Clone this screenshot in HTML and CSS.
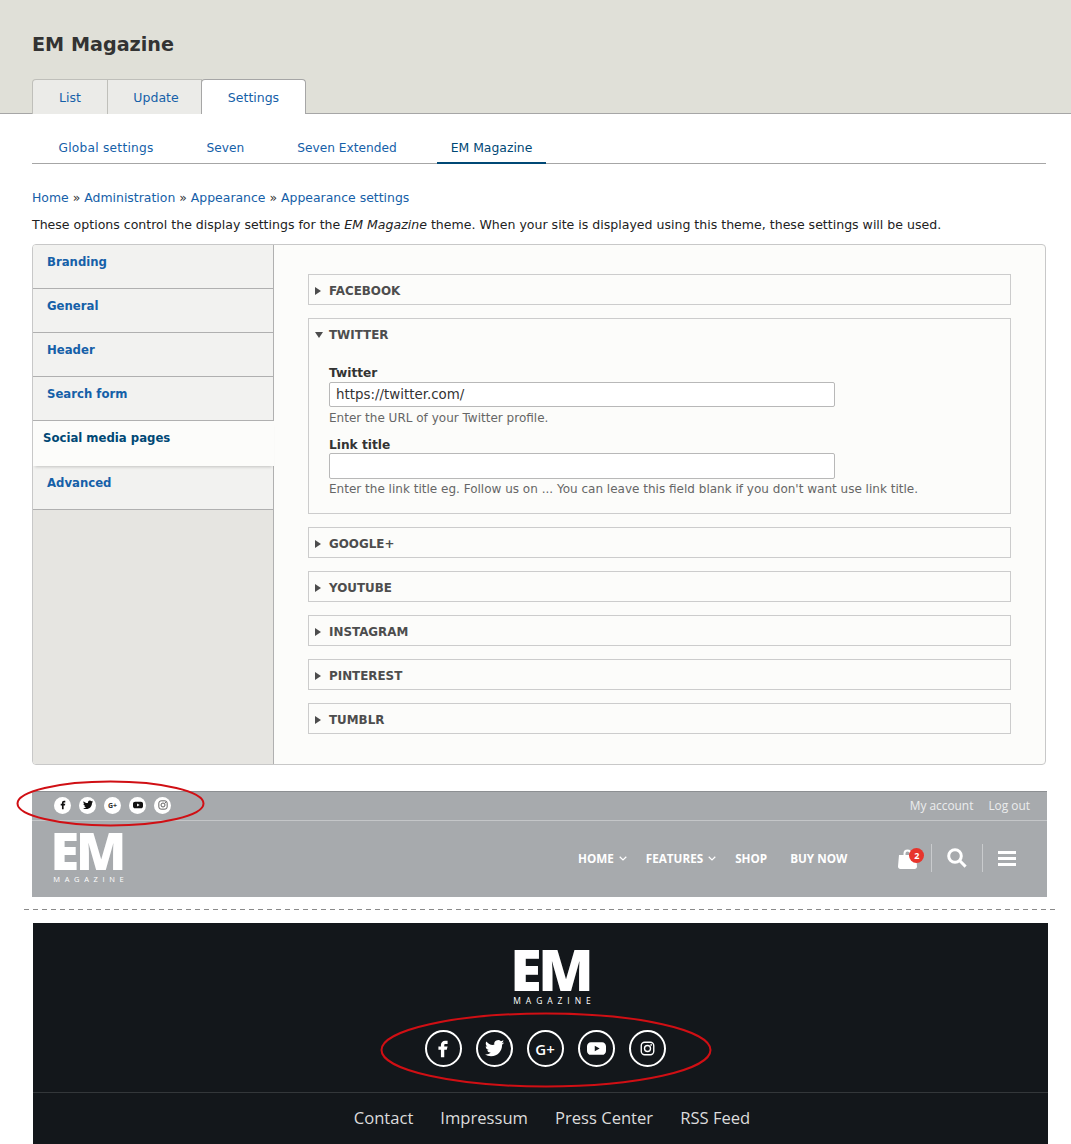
FILE: index.html
```html
<!DOCTYPE html>
<html lang="en">
<head>
<meta charset="utf-8">
<title>EM Magazine</title>
<link rel="stylesheet" href="styles.css">
</head>
<body>
<svg class="defs" width="0" height="0" aria-hidden="true">
  <symbol id="i-fb" viewBox="-0.5 2 24 24"><path d="M14 8h3V4h-3c-2.8 0-5 2.2-5 5v2H6v4h3v9h4v-9h3l1-4h-4V9c0-.6.4-1 1-1z"/></symbol>
  <symbol id="i-tw" viewBox="0 0 24 24"><path d="M23.953 4.57a10 10 0 01-2.825.775 4.958 4.958 0 002.163-3.746 9.864 9.864 0 01-3.127 1.184 4.92 4.92 0 00-8.384 4.482C7.69 8.095 4.067 6.13 1.64 3.162a4.822 4.822 0 00-.666 2.475c0 1.71.87 3.213 2.188 4.096a4.904 4.904 0 01-2.228-.616v.06a4.923 4.923 0 003.946 4.827 4.996 4.996 0 01-2.212.085 4.936 4.936 0 004.604 3.417 9.867 9.867 0 01-6.102 2.105c-.39 0-.779-.023-1.17-.067a13.995 13.995 0 007.557 2.209c9.053 0 13.998-7.496 13.998-13.985 0-.21 0-.42-.015-.63A9.935 9.935 0 0024 4.59z"/></symbol>
  <symbol id="i-yt" viewBox="0 0 24 24"><path fill-rule="evenodd" d="M5 4h14c2.8 0 5 2.2 5 5v6c0 2.800-2.200 5-5 5H5c-2.800 0-5-2.200-5-5V9c0-2.800 2.200-5 5-5zm4.800 4.400v7.200l6.200-3.600z"/></symbol>
  <symbol id="i-ig" viewBox="0 0 24 24"><rect x="2" y="2" width="20" height="20" rx="5.500" fill="none" stroke="currentColor" stroke-width="2.200"/><circle cx="12" cy="12" r="4.800" fill="none" stroke="currentColor" stroke-width="2.200"/><circle cx="17.800" cy="6.200" r="1.400"/></symbol>
</svg>

<header class="admin-head">
  <h1 class="title">EM Magazine</h1>
  <nav class="tabs">
    <a class="tab" href="#">List</a>
    <a class="tab tab-update" href="#">Update</a>
    <a class="tab tab-active" href="#">Settings</a>
  </nav>
</header>

<main class="admin-body">
  <nav class="subtabs">
    <a class="subtab subtab-first" href="#">Global settings</a>
    <a class="subtab" href="#">Seven</a>
    <a class="subtab" href="#">Seven Extended</a>
    <a class="subtab subtab-active" href="#">EM Magazine</a>
  </nav>
  <p class="crumbs"><a href="#">Home</a> » <a href="#">Administration</a> » <a href="#">Appearance</a> » <a href="#">Appearance settings</a></p>
  <p class="help">These options control the display settings for the <em>EM Magazine</em> theme. When your site is displayed using this theme, these settings will be used.</p>

  <section class="panel">
    <ul class="side">
      <li class="side-item"><a href="#">Branding</a></li>
      <li class="side-item"><a href="#">General</a></li>
      <li class="side-item"><a href="#">Header</a></li>
      <li class="side-item"><a href="#">Search form</a></li>
      <li class="side-item side-active"><a href="#">Social media pages</a></li>
      <li class="side-item"><a href="#">Advanced</a></li>
    </ul>
    <div class="panes">
      <details class="fold"><summary>FACEBOOK</summary></details>
      <details class="fold" open>
        <summary>TWITTER</summary>
        <div class="fold-body">
          <label class="lbl" for="tw">Twitter</label>
          <input class="field" id="tw" type="text" value="https://twitter.com/">
          <p class="desc">Enter the URL of your Twitter profile.</p>
          <label class="lbl lbl-next" for="tt">Link title</label>
          <input class="field field-tall" id="tt" type="text">
          <p class="desc">Enter the link title eg. Follow us on ... You can leave this field blank if you don't want use link title.</p>
        </div>
      </details>
      <details class="fold"><summary>GOOGLE+</summary></details>
      <details class="fold"><summary>YOUTUBE</summary></details>
      <details class="fold"><summary>INSTAGRAM</summary></details>
      <details class="fold"><summary>PINTEREST</summary></details>
      <details class="fold"><summary>TUMBLR</summary></details>
    </div>
  </section>
</main>

<section class="site-head">
  <svg class="ring ring-top" viewBox="0 0 189 47" aria-hidden="true"><ellipse cx="94.500" cy="23.500" rx="93" ry="22"/></svg>
  <div class="topbar">
    <div class="mini-social">
      <span class="mini"><svg class="ic"><use href="#i-fb"/></svg></span>
      <span class="mini"><svg class="ic"><use href="#i-tw"/></svg></span>
      <span class="mini mini-g">G+</span>
      <span class="mini"><svg class="ic"><use href="#i-yt"/></svg></span>
      <span class="mini mini-ig"><svg class="ic"><use href="#i-ig"/></svg></span>
    </div>
    <div class="account"><a href="#">My account</a><a href="#">Log out</a></div>
  </div>
  <div class="mainbar">
    <div class="logo logo-sm">
      <svg class="logo-mark" viewBox="0 0 69 37" preserveAspectRatio="none"><text class="logo-em" x="-3.400" y="37">EM</text></svg>
      <span class="logo-sub">MAGAZINE</span>
    </div>
    <nav class="menu">
      <a class="menu-link" href="#">HOME<svg class="chev" viewBox="0 0 8 5"><path d="M.7.8 4 4l3.300-3.200"/></svg></a>
      <a class="menu-link" href="#">FEATURES<svg class="chev" viewBox="0 0 8 5"><path d="M.7.8 4 4l3.300-3.200"/></svg></a>
      <a class="menu-link" href="#">SHOP</a>
      <a class="menu-link" href="#">BUY NOW</a>
    </nav>
    <div class="tools">
      <span class="tool tool-cart">
        <svg class="bag" viewBox="0 0 19 20"><path d="M5.500 6V4.500a4 4 0 0 1 8 0V6H18l1 11.500c0 1.400-1 2.500-2.400 2.500H2.400C1 20 0 18.900 0 17.500L1 6zm2 0h4V4.500a2 2 0 0 0-4 0z"/></svg>
        <span class="badge">2</span>
      </span>
      <span class="tool tool-search">
        <svg class="search" viewBox="0 0 20 20"><circle cx="8" cy="8" r="6.300"/><path d="m12.800 12.800 5.800 5.800"/></svg>
      </span>
      <span class="tool tool-menu"><span class="burger"></span></span>
    </div>
  </div>
</section>

<hr class="cut">

<footer class="site-foot">
  <svg class="ring ring-foot" viewBox="0 0 332 76" preserveAspectRatio="none" aria-hidden="true"><ellipse cx="166" cy="38" rx="164.500" ry="36.500"/></svg>
  <div class="logo logo-lg">
    <svg class="logo-mark" viewBox="0 0 69 37" preserveAspectRatio="none"><text class="logo-em" x="-3.400" y="37">EM</text></svg>
    <span class="logo-sub">MAGAZINE</span>
  </div>
  <div class="social">
    <span class="circle"><svg class="ic"><use href="#i-fb"/></svg></span>
    <span class="circle"><svg class="ic ic-tw"><use href="#i-tw"/></svg></span>
    <span class="circle circle-g">G+</span>
    <span class="circle"><svg class="ic ic-tw"><use href="#i-yt"/></svg></span>
    <span class="circle circle-ig"><svg class="ic"><use href="#i-ig"/></svg></span>
  </div>
  <nav class="foot-links">
    <a href="#">Contact</a><a href="#">Impressum</a><a href="#">Press Center</a><a href="#">RSS Feed</a>
  </nav>
</footer>
</body>
</html>
```
FILE: styles.css
```css
* { box-sizing: border-box; }
html, body { margin: 0; padding: 0; }
body {
  background: #fff;
  color: #222;
  font-family: "DejaVu Sans", sans-serif;
  font-size: 12.500px;
  height: 1144px;
  overflow: hidden;
}
a { color: #1560a8; text-decoration: none; }
.defs { position: absolute; }

.admin-head {
  background: #e0e0d8;
  height: 114px;
  padding: 33px 0 0 32px;
  border-bottom: 1px solid #a6a6a6;
}
.title {
  margin: 0;
  font-size: 19.200px;
  line-height: 24px;
  font-weight: 700;
  color: #333;
}
.tabs { display: flex; margin-top: 22px; height: 35px; }
.tab {
  height: 35px;
  padding-top: 10px;
  text-align: center;
  background: #ebebe8;
  border: 1px solid #bfbfba;
  border-bottom: 0;
  margin-right: -1px;
  line-height: 16px;
  width: 95px;
}
.tab:first-child { width: 76px; border-radius: 4px 0 0 0; }
.tab-update { padding-left: 3px; }
.tab-active {
  width: 105px;
  background: #fff;
  border-color: #a6a6a6;
  border-radius: 4px 4px 0 0;
  position: relative;
  z-index: 1;
}

.admin-body { padding: 0 25px 0 32px; }
.subtabs {
  display: flex;
  height: 50px;
  border-bottom: 1px solid #a6a6a6;
  padding-top: 26px;
  font-size: 12.200px;
}
.subtab {
  padding: 0 26.500px;
  line-height: 16px;
  height: 24px;
}
.subtab-first { letter-spacing: .25px; }
.subtab-active {
  color: #004875;
  border-bottom: 2px solid #004875;
  padding: 0 14px;
  margin-left: 13.500px;
  font-size: 12.400px;
}
.crumbs { margin: 26px 0 0; line-height: 16px; color: #333; font-size: 12.450px; }
.help { margin: 11px 0 0; line-height: 16px; font-size: 12.550px; }

.panel {
  display: flex;
  margin-top: 11px;
  height: 521px;
  border: 1px solid #c8c8c8;
  border-radius: 4px;
  background: #fcfcfa;
  overflow: hidden;
}
.side {
  list-style: none;
  margin: 0;
  padding: 0;
  width: 241px;
  flex: none;
  background: #e6e5e1;
  border-right: 1px solid #b0b0b0;
}
.side-item {
  height: 44px;
  padding: 9px 0 0 14px;
  background: #f2f2f0;
  border-bottom: 1px solid #b0b0b0;
  font-weight: 700;
  font-size: 11.700px;
  line-height: 16px;
}
.side-active {
  width: 241px;
  height: 45px;
  padding-left: 10px;
  background: #fcfcfa;
  border-bottom: 0;
  box-shadow: 0 3px 3px -2px rgba(0, 0, 0, .2);
  position: relative;
}
.side-active a { color: #004875; }
.panes {
  flex: 1;
  padding: 29px 34px 0;
  display: flex;
  flex-direction: column;
  gap: 13px;
}
.fold { background: #fcfcfa; border: 1px solid #ccc; }
.fold summary {
  list-style: none;
  display: flex;
  align-items: center;
  height: 29px;
  padding: 2px 0 0 6px;
  font-weight: 700;
  font-size: 11.900px;
  color: #4d4d4d;
}
.fold summary::-webkit-details-marker { display: none; }
.fold summary::before {
  content: "";
  width: 0;
  height: 0;
  margin-right: 8px;
  border-left: 6px solid #4d4d4d;
  border-top: 4px solid transparent;
  border-bottom: 4px solid transparent;
}
.fold[open] summary { height: 30px; }
.fold[open] summary::before {
  border-left: 4px solid transparent;
  border-right: 4px solid transparent;
  border-top: 6px solid #4d4d4d;
  border-bottom: 0;
  margin-right: 6px;
}
.fold-body { padding: 16px 20px 17px; height: 164px; }
.lbl { display: block; font-weight: 700; font-size: 12.200px; color: #333; line-height: 16px; }
.lbl-next { margin-top: 11px; }
.field {
  display: block;
  width: 506px;
  height: 25px;
  margin-top: 1px;
  padding: 0 6px;
  border: 1px solid #b8b8b8;
  border-radius: 2px;
  background: #fff;
  font: 13.400px "DejaVu Sans", sans-serif;
  color: #333;
}
.field-tall { height: 26px; margin-top: 0; }
.desc { margin: 3px 0 0; font-size: 12.030px; line-height: 16px; color: #666; }
.field-tall + .desc { margin-top: 2px; }

.site-head {
  position: relative;
  margin: 26px 24px 0 32px;
  height: 106px;
  background: #a7aaad;
  border-top: 1px solid #8c8f92;
  font-family: "Open Sans", sans-serif;
  color: #fff;
}
.ring { position: absolute; fill: none; stroke: #d00f14; stroke-width: 2; z-index: 2; }
.ring-top { left: -16px; top: -12px; width: 189px; height: 47px; }
.ring-foot { left: 347px; top: 89px; width: 332px; height: 76px; }
.topbar {
  display: flex;
  justify-content: space-between;
  align-items: center;
  height: 29px;
  padding: 0 17px 2px 22px;
  border-bottom: 1px solid #c4c6c8;
}
.mini-social { display: flex; gap: 8px; }
.mini {
  display: flex;
  align-items: center;
  justify-content: center;
  width: 17px;
  height: 17px;
  border-radius: 50%;
  background: #fff;
  color: #111;
  fill: #111;
}
.mini .ic { width: 10px; height: 10px; }
.mini-g { font-size: 7px; font-weight: 700; color: #333; }
.mini-ig { color: #555; fill: #555; }
.account { display: flex; gap: 15px; font-size: 11.900px; }
.account a { color: #eceded; }
.mainbar { display: flex; align-items: flex-start; height: 76px; padding-left: 22px; }
.logo { display: flex; flex-direction: column; align-items: center; color: #fff; flex: none; }
.logo-mark { display: block; overflow: visible; fill: #fff; }
.logo-em {
  font-family: "Open Sans", sans-serif;
  font-size: 52px;
  font-weight: 800;
  letter-spacing: -3.200px;
}
.logo-sub { font-weight: 400; }
.logo-sm { width: 69px; margin-top: 12px; }
.logo-sm .logo-mark { width: 69px; height: 37px; }
.logo-sm .logo-sub { font-size: 7.500px; line-height: 10px; margin-top: 4px; letter-spacing: .62em; margin-right: -.62em; }
.menu {
  display: flex;
  margin: 29px 0 0 455px;
  gap: 19px;
  font-size: 11.700px;
  font-weight: 700;
}
.menu-link { color: #fff; line-height: 16px; display: flex; align-items: center; }
.menu-link:nth-child(4) { margin-left: 4px; }
.chev { width: 8px; height: 5px; margin-left: 5px; fill: none; stroke: #fff; stroke-width: 1.200; }
.tools { display: flex; height: 28px; margin: 23px 0 0 51px; }
.tool { display: flex; align-items: center; height: 28px; }
.tool-cart { width: 34px; position: relative; border-right: 1px solid #c9cbcd; }
.bag { width: 19px; height: 20px; fill: #fff; margin-top: 2px; }
.badge {
  position: absolute;
  left: 11px;
  top: 4px;
  width: 15px;
  height: 15px;
  border-radius: 50%;
  background: #e7342c;
  font-size: 9px;
  font-weight: 700;
  line-height: 15px;
  text-align: center;
  color: #fff;
}
.tool-search { width: 51px; padding-left: 15px; border-right: 1px solid #c9cbcd; }
.search { width: 20px; height: 20px; fill: none; stroke: #fff; stroke-width: 3; }
.tool-menu { padding-left: 15px; }
.burger {
  display: block;
  width: 18px;
  height: 15px;
  border-top: 3px solid #fff;
  border-bottom: 3px solid #fff;
  position: relative;
}
.burger::after {
  content: "";
  position: absolute;
  left: 0;
  right: 0;
  top: 3px;
  height: 3px;
  background: #fff;
}
.cut {
  margin: 12px 12px 0 24px;
  border: 0;
  height: 1px;
  background: repeating-linear-gradient(90deg, #8a8a8a 0 5px, transparent 5px 9px);
}
.site-foot {
  position: relative;
  margin: 13px 23px 0 33px;
  height: 221px;
  background: #13171b;
  font-family: "Open Sans", sans-serif;
  display: flex;
  flex-direction: column;
  align-items: center;
  padding: 28px 0 0 23px;
}
.logo-lg { width: 76px; }
.logo-lg .logo-mark { width: 76px; height: 40px; }
.logo-lg .logo-sub { font-size: 8.500px; line-height: 10px; margin-top: 5px; letter-spacing: .58em; margin-right: -.58em; }
.social { display: flex; gap: 14px; margin: 24px 14px 0 0; }
.circle {
  display: flex;
  align-items: center;
  justify-content: center;
  width: 37px;
  height: 37px;
  border-radius: 50%;
  border: 2px solid #fff;
  color: #fff;
  fill: #fff;
}
.circle .ic { width: 20px; height: 20px; }
.circle .ic-tw { width: 19px; height: 19px; }
.circle-ig .ic { width: 15px; height: 15px; }
.circle-g { font-size: 15px; font-weight: 600; }
.foot-links {
  align-self: stretch;
  margin: 25px 0 0 -23px;
  padding: 13px 0 0 23px;
  border-top: 1px solid #33373a;
  display: flex;
  justify-content: center;
  gap: 27px;
  font-size: 16.600px;
  line-height: 24px;
}
.foot-links a { color: #dcdcdc; }
```
